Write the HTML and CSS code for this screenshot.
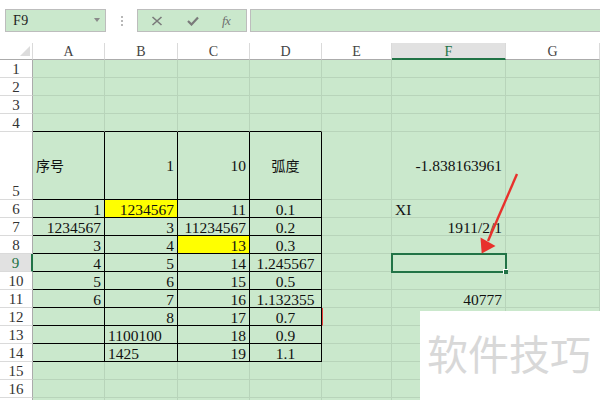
FILE: index.html
```html
<!DOCTYPE html>
<html>
<head>
<meta charset="utf-8">
<link rel="stylesheet" href="styles.css">
</head>
<body>
<div class="app">
  <div class="fbar">
    <div class="namebox"><span class="nbtext">F9</span><span class="caret"></span></div>
    <div class="dots"><i></i><i></i><i></i></div>
    <div class="tools">
      <svg class="ico" width="12" height="10" viewBox="0 0 12 10"><path d="M1.5 1 L10.5 9 M10.5 1 L1.5 9" stroke="#7a7a7a" stroke-width="1.6" fill="none"/></svg>
      <svg class="ico" width="12" height="10" viewBox="0 0 12 10"><path d="M1 5 L4.5 8.5 L11 1.5" stroke="#7a7a7a" stroke-width="2.2" fill="none"/></svg>
      <span class="fx">fx</span>
    </div>
    <div class="finput"></div>
  </div>

  <div class="sheet">
    <div class="ch corner"><span class="tri"></span></div>
    <div class="ch">A</div><div class="ch">B</div><div class="ch">C</div><div class="ch">D</div><div class="ch">E</div><div class="ch sel">F</div><div class="ch">G</div>

    <div class="rh">1</div><div class="c"></div><div class="c"></div><div class="c"></div><div class="c"></div><div class="c"></div><div class="c"></div><div class="c"></div>
    <div class="rh">2</div><div class="c"></div><div class="c"></div><div class="c"></div><div class="c"></div><div class="c"></div><div class="c"></div><div class="c"></div>
    <div class="rh">3</div><div class="c"></div><div class="c"></div><div class="c"></div><div class="c"></div><div class="c"></div><div class="c"></div><div class="c"></div>
    <div class="rh">4</div><div class="c bb"></div><div class="c bb"></div><div class="c bb"></div><div class="c bb"></div><div class="c"></div><div class="c"></div><div class="c"></div>

    <div class="rh tallh">5</div><div class="c b tall zh">序号</div><div class="c b tall r">1</div><div class="c b tall r">10</div><div class="c b tall m zh">弧度</div><div class="c tall"></div><div class="c tall r">-1.838163961</div><div class="c tall"></div>

    <div class="rh">6</div><div class="c b r">1</div><div class="c b r y">1234567</div><div class="c b r">11</div><div class="c b m">0.1</div><div class="c"></div><div class="c">XI</div><div class="c"></div>
    <div class="rh">7</div><div class="c b r">1234567</div><div class="c b r">3</div><div class="c b r">11234567</div><div class="c b m">0.2</div><div class="c"></div><div class="c r">1911/2/1</div><div class="c"></div>
    <div class="rh">8</div><div class="c b r">3</div><div class="c b r">4</div><div class="c b r y">13</div><div class="c b m">0.3</div><div class="c"></div><div class="c"></div><div class="c"></div>
    <div class="rh sel">9</div><div class="c b r">4</div><div class="c b r">5</div><div class="c b r">14</div><div class="c b m">1.245567</div><div class="c"></div><div class="c"></div><div class="c"></div>
    <div class="rh">10</div><div class="c b r">5</div><div class="c b r">6</div><div class="c b r">15</div><div class="c b m">0.5</div><div class="c"></div><div class="c"></div><div class="c"></div>
    <div class="rh">11</div><div class="c b r">6</div><div class="c b r">7</div><div class="c b r">16</div><div class="c b m">1.132355</div><div class="c"></div><div class="c r">40777</div><div class="c"></div>
    <div class="rh">12</div><div class="c b"></div><div class="c b r">8</div><div class="c b r">17</div><div class="c b m">0.7</div><div class="c redl"></div><div class="c"></div><div class="c"></div>
    <div class="rh">13</div><div class="c b"></div><div class="c b">1100100</div><div class="c b r">18</div><div class="c b m">0.9</div><div class="c"></div><div class="c"></div><div class="c"></div>
    <div class="rh">14</div><div class="c b"></div><div class="c b">1425</div><div class="c b r">19</div><div class="c b m">1.1</div><div class="c"></div><div class="c"></div><div class="c"></div>
    <div class="rh">15</div><div class="c"></div><div class="c"></div><div class="c"></div><div class="c"></div><div class="c"></div><div class="c"></div><div class="c"></div>
    <div class="rh">16</div><div class="c"></div><div class="c"></div><div class="c"></div><div class="c"></div><div class="c"></div><div class="c"></div><div class="c"></div>
    <div class="rh"></div><div class="c"></div><div class="c"></div><div class="c"></div><div class="c"></div><div class="c"></div><div class="c"></div><div class="c"></div>
  </div>

  <div class="selbox"><span class="handle"></span></div>

  <svg class="arrow" width="600" height="400" viewBox="0 0 600 400">
    <line x1="517" y1="174" x2="488" y2="241" stroke="#e8312c" stroke-width="2.4"/>
    <polygon points="481.7,253.5 480.5,237.5 495.5,246" fill="#e8312c"/>
  </svg>

  <div class="watermark">软件技巧</div>
</div>
</body>
</html>
```

FILE: styles.css
```css
* { box-sizing: border-box; }
html, body { margin: 0; padding: 0; }
body {
  width: 600px;
  height: 400px;
  overflow: hidden;
  background: #ffffff;
  font-family: "Liberation Serif", "Noto Sans CJK SC", serif;
}
.app {
  position: relative;
  width: 600px;
  height: 400px;
  overflow: hidden;
}

/* formula bar */
.fbar {
  height: 43px;
  display: flex;
  align-items: flex-start;
  padding-top: 9px;
  padding-left: 5px;
}
.namebox {
  width: 101px;
  height: 23px;
  background: #cae8cc;
  border: 1px solid #bdbdbd;
  display: flex;
  align-items: center;
  justify-content: space-between;
  padding: 0 5px 0 7px;
}
.nbtext {
  font-size: 14px;
  color: #222;
  letter-spacing: 0.5px;
}
.caret {
  width: 0;
  height: 0;
  border-left: 3.5px solid transparent;
  border-right: 3.5px solid transparent;
  border-top: 4px solid #8a8a8a;
  margin-top: -2px;
}
.dots {
  width: 31px;
  height: 23px;
  display: flex;
  flex-direction: column;
  align-items: center;
  justify-content: center;
  gap: 2px;
  padding-left: 1px;
}
.dots i {
  display: block;
  width: 2px;
  height: 2px;
  background: #b8b8b8;
}
.tools {
  width: 110px;
  height: 23px;
  background: #cae8cc;
  border: 1px solid #bdbdbd;
  display: flex;
  align-items: center;
  padding-left: 13px;
  gap: 24px;
}
.ico { display: block; }
.fx {
  font-style: italic;
  font-size: 13px;
  color: #6f6f6f;
  letter-spacing: -0.5px;
  margin-left: -1px;
}
.finput {
  flex: 1;
  height: 23px;
  margin-left: 3px;
  background: #cae8cc;
  border: 1px solid #bdbdbd;
  border-right: none;
}

/* sheet grid */
.sheet {
  display: grid;
  grid-template-columns: 33px 72px 73px 72px 72px 70px 114px 94px;
  grid-template-rows: 17px repeat(4, 18px) 68px repeat(12, 18px);
}
.ch {
  background: #ffffff;
  border-right: 1px solid #dadada;
  border-bottom: 1px solid #ababab;
  font-size: 14px;
  color: #444;
  text-align: center;
  line-height: 17px;
}
.ch.sel {
  background: #e1e1e1;
  color: #217346;
  border-bottom: 2px solid #217346;
}
.corner {
  position: relative;
  border-right-color: #dadada;
}
.tri {
  position: absolute;
  right: 2px;
  bottom: 3px;
  width: 0;
  height: 0;
  border-left: 10px solid transparent;
  border-bottom: 10px solid #dcdcdc;
}
.rh {
  background: #ffffff;
  border-right: 1px solid #ababab;
  border-bottom: 1px solid #dadada;
  font-size: 15px;
  color: #333;
  text-align: center;
  line-height: 17px;
  padding-top: 1px;
}
.rh.tallh {
  line-height: 17px;
  padding-top: 51px;
}
.rh.sel {
  background: #e1e1e1;
  border-right: 2px solid #217346;
  color: #217346;
}
.c {
  background: #cae8cc;
  border-right: 1px solid #b8d4ba;
  border-bottom: 1px solid #b8d4ba;
  font-size: 15.5px;
  color: #111;
  line-height: 17px;
  padding: 1px 3px 0 3px;
  white-space: nowrap;
}
.c.tall {
  line-height: 67px;
  padding-top: 0;
}
.c.r { text-align: right; }
.c.m { text-align: center; }
.c.b {
  border-right-color: #000;
  border-bottom-color: #000;
}
.c.bb { border-bottom-color: #000; }
.c.y { background: #ffff00; }
.zh {
  font-family: "Noto Sans CJK SC", sans-serif;
  font-size: 14px;
}
.c.redl { border-left: 1px solid #e8413a; }

/* overlays */
.selbox {
  position: absolute;
  left: 391px;
  top: 253px;
  width: 116px;
  height: 20px;
  border: 2px solid #217346;
}
.handle {
  position: absolute;
  right: -3px;
  bottom: -3px;
  width: 5px;
  height: 5px;
  background: #217346;
  border: 1px solid #ffffff;
  border-width: 1px 0 0 1px;
}
.arrow {
  position: absolute;
  left: 0;
  top: 0;
  pointer-events: none;
}
.watermark {
  position: absolute;
  left: 420px;
  top: 311px;
  width: 180px;
  height: 89px;
  background: #ffffff;
  font-family: "Noto Sans CJK SC", sans-serif;
  font-size: 41px;
  color: #d8d8d8;
  line-height: 41px;
  padding: 21px 0 0 7px;
  white-space: nowrap;
}
```
